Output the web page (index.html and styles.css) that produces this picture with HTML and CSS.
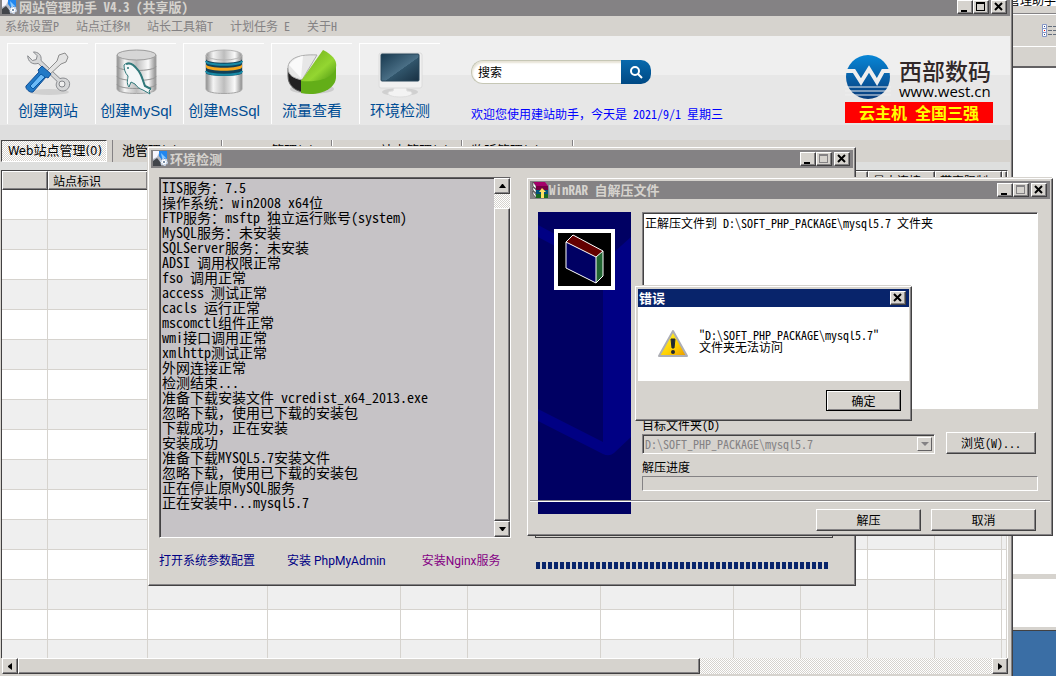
FILE: index.html
```html
<!DOCTYPE html>
<html lang="zh-CN">

<head>
    <meta charset="UTF-8">
    <meta name="viewport" content="width=device-width, initial-scale=1.0">
    <title>网站管理助手 V4.3</title>
    <link rel="stylesheet" href="styles.css">
</head>

<body>
    <svg class="defs" width="0" height="0" aria-hidden="true">
        <defs>
            <linearGradient id="metal" x1="0" x2="1" y1="0" y2="0">
                <stop offset="0" stop-color="#8c8c8c" />
                <stop offset=".2" stop-color="#f4f4f4" />
                <stop offset=".5" stop-color="#bdbdbd" />
                <stop offset=".8" stop-color="#fafafa" />
                <stop offset="1" stop-color="#8c8c8c" />
            </linearGradient>
            <linearGradient id="green" x1="0" x2="1" y1="0" y2="1">
                <stop offset="0" stop-color="#6ba818" />
                <stop offset=".6" stop-color="#94d631" />
                <stop offset="1" stop-color="#4a9410" />
            </linearGradient>
            <linearGradient id="screen" x1="0" x2="1" y1="0" y2="1">
                <stop offset="0" stop-color="#18394f" />
                <stop offset=".55" stop-color="#4a6f86" />
                <stop offset=".56" stop-color="#31556b" />
                <stop offset="1" stop-color="#183042" />
            </linearGradient>
            <linearGradient id="globe" x1="0" x2="0" y1="0" y2="1">
                <stop offset="0" stop-color="#0886d6" />
                <stop offset="1" stop-color="#083c7b" />
            </linearGradient>
            <linearGradient id="warn" x1="0" x2="1" y1="0" y2="1">
                <stop offset="0" stop-color="#ffff42" />
                <stop offset=".6" stop-color="#ffcf00" />
                <stop offset="1" stop-color="#e79600" />
            </linearGradient>
            <symbol id="app" viewBox="0 0 16 16">
                <path d="M0 0h8v14H0z" fill="#b5bac6" />
                <path d="M0 0h7L4 6 0 8z" fill="#f7f7ff" />
                <path d="M0 10l4-3 4 5v3H0z" fill="#42454a" />
                <path d="M6 0h8v9H9L6 5z" fill="#2186ef" />
                <path d="M8 2l5 5h-4z" fill="#84c7ff" />
                <circle cx="11" cy="11" r="3" fill="#fff" stroke="#c6d3e7" stroke-width="2" stroke-dasharray="2 1" />
                <circle cx="11" cy="11" r="1" fill="#526d8c" />
            </symbol>
            <symbol id="min" viewBox="0 0 10 10"><path d="M1 8h6v2H1z" /></symbol>
            <symbol id="max" viewBox="0 0 10 10"><path d="M0 0h9v9H0zM1 2v6h7V2z" fill-rule="evenodd" /></symbol>
            <symbol id="close" viewBox="0 0 10 10"><path d="M1 1l7 7M8 1L1 8" stroke="currentColor" stroke-width="2" /></symbol>
        </defs>
    </svg>

    <!-- window behind everything -->
    <div class="back-window">
        <div class="back-title">网站管理助手</div>
        <div class="back-bar"></div>
        <div class="back-tools">
            <svg width="14" height="14" viewBox="0 0 14 14">
                <path d="M.5.5h4v4h-4zM.5 4.5h4v4h-4zM.5 8.5h4v4h-4z" fill="#fff" stroke="#8496c6" />
                <path d="M2 2h1v1H2zM2 10h1v1H2z" fill="#314a84" />
                <path d="M2 6h1v1H2z" fill="#f00" />
                <path d="M6 2.500h8M6 6.500h8M6 10.500h8" stroke="#636d7b" stroke-dasharray="4 1" />
            </svg>
        </div>
        <div class="back-address"></div>
        <div class="back-list"></div>
        <div class="back-split"></div>
        <div class="back-status"></div>
    </div>

    <!-- main window -->
    <div class="main-window">
        <div class="titlebar main-title">
            <svg class="app-icon"><use href="#app" /></svg>
            <h1>网站管理助手 V4.3 (共享版)</h1>
            <div class="win-btns">
                <button aria-label="最小化"><svg><use href="#min" /></svg></button>
                <button aria-label="最大化"><svg><use href="#max" /></svg></button>
                <button class="x" aria-label="关闭"><svg><use href="#close" /></svg></button>
            </div>
        </div>
        <nav class="menu">
            <a href="#">系统设置P</a>
            <a href="#">站点迁移M</a>
            <a href="#">站长工具箱T</a>
            <a href="#">计划任务 E</a>
            <a href="#">关于H</a>
        </nav>

        <div class="banner">
            <div class="tools">
                <button class="tool">
                    <svg viewBox="0 0 50 50">
                        <ellipse cx="26" cy="43" rx="20" ry="3" fill="#d0d0d0" />
                        <path d="M6 5l5 5 4-1 1-4-4-4c5 0 9 3 8 9l20 19c6-2 11 2 10 7-1 6-8 8-12 4-3-3-2-6-1-8L17 13c-6 2-11-2-11-8z" transform="translate(-1 2) scale(.95)" fill="#d6d7d8" stroke="#84868a" />
                        <circle cx="39" cy="35" r="3" fill="#eee" stroke="#84868a" />
                        <path d="M42 4l-6 2-2 6-12 12 3 3 13-12 5-2 2-5z" fill="#e3e3e3" stroke="#8c8c8c" />
                        <path d="M19 17l9 8-3 4-2-1-13 15c-3 1-8-3-7-6l13-14-1-2z" fill="#2179c6" stroke="#104d94" />
                        <path d="M18 25l4 3-12 12-3-3z" fill="#6bbaf7" stroke="#0859a5" />
                    </svg>
                    <span>创建网站</span>
                </button>
                <button class="tool">
                    <svg viewBox="0 0 50 50">
                        <path d="M6 6v34c0 6 39 6 39 0V6z" fill="url(#metal)" stroke="#a5a5a5" />
                        <path d="M6 17c0 6 39 6 39 0M6 27c0 6 39 6 39 0M6 35c0 6 39 6 39 0" fill="none" stroke="#949494" />
                        <ellipse cx="25.500" cy="6" rx="19.500" ry="5" fill="#d6d6d6" stroke="#9c9c9c" />
                        <path d="M13 16c4-4 10-1 13 4 5 5 5 10 8 17l6 3-2 2 1 3-7-4c-3-1-6-3-8-6l-4-2-2 5c-3-4-1-8-1-11-3-3-4-7-4-11z" fill="#f3f7f8" stroke="#31797b" />
                        <path d="M15 15c5-2 8 1 11 5 5 5 5 10 8 17l6 3" fill="none" stroke="#31797b" stroke-width="2" />
                        <circle cx="17" cy="19" r="1" fill="#31797b" />
                    </svg>
                    <span>创建MySql</span>
                </button>
                <button class="tool">
                    <svg viewBox="0 0 50 50">
                        <path d="M7 6v34c0 6 36 6 36 0V6z" fill="url(#metal)" stroke="#a5a5a5" />
                        <path d="M7 10c0 5 36 5 36 0v14c0 4-36 4-36 0z" fill="#10415a" />
                        <path d="M7 15c0 5 36 5 36 0v3c0 5-36 5-36 0z" fill="#f7a61c" />
                        <path d="M7 12c0 5 36 5 36 0M7 22c0 5 36 5 36 0" fill="none" stroke="#188aa5" stroke-width="2" />
                        <ellipse cx="25" cy="6" rx="18" ry="5" fill="url(#metal)" stroke="#b5b5b5" />
                    </svg>
                    <span>创建MsSql</span>
                </button>
                <button class="tool">
                    <svg viewBox="0 0 50 50">
                        <ellipse cx="25" cy="40" rx="22" ry="5" fill="#ccc" />
                        <path d="M1 19v8c0 9 6 14 14 16V30z" fill="#212021" stroke="#636363" />
                        <path d="M1 19C1 9 13 5 30 6L15 31C6 29 1 26 1 19z" fill="#e7e7e7" stroke="#adadad" />
                        <path d="M16 7l-2 22L2 16c4-5 8-8 14-9z" fill="#fafafa" />
                        <path d="M14 31v13c18 4 35-4 35-16V14z" fill="#63ae18" />
                        <path d="M36 1c16 8 15 17 10 23-6 7-18 9-32 8z" fill="url(#green)" />
                    </svg>
                    <span>流量查看</span>
                </button>
                <button class="tool">
                    <svg viewBox="0 0 50 50">
                        <ellipse cx="25" cy="43" rx="18" ry="4" fill="#d0d0d0" />
                        <path d="M20 36h11l1 6c8 0 7 6-7 6s-15-6-7-6z" fill="#f3f3f3" stroke="#dedede" />
                        <rect x="4" y="4" width="43" height="35" rx="2" fill="#f1f1f1" stroke="#dcdcdc" />
                        <rect x="6" y="5" width="38" height="27" rx="1" fill="url(#screen)" stroke="#28465a" />
                    </svg>
                    <span>环境检测</span>
                </button>
            </div>
            <div class="search-area">
                <form class="search">
                    <input type="text" value="搜索" aria-label="搜索">
                    <button type="button" aria-label="开始搜索">
                        <svg width="14" height="14" viewBox="0 0 14 14">
                            <circle cx="6" cy="6" r="4" fill="none" stroke="#fff" stroke-width="2" />
                            <path d="M9 9l4 4" stroke="#fff" stroke-width="2" />
                        </svg>
                    </button>
                </form>
                <p class="welcome">欢迎您使用建站助手，今天是 2021/9/1 星期三</p>
            </div>
            <div class="brand">
                <div class="logo">
                    <svg width="46" height="46" viewBox="0 0 46 46">
                        <circle cx="23" cy="23" r="22" fill="url(#globe)" />
                        <path d="M0 17h9l7 11 8-13 8 13 6-11h8" fill="none" stroke="#eee" stroke-width="4" />
                        <path d="M0 33h46M0 37h46M0 41h46" stroke="#eee" stroke-width="1" />
                    </svg>
                    <div class="logo-text"><b>西部数码</b><span>www.west.cn</span></div>
                </div>
                <div class="slogan">云主机 全国三强</div>
            </div>
        </div>

        <div class="tabs">
            <button class="tab active">Web站点管理(0)</button>
            <button class="tab w-pool">池管理(0)</button>
            <button class="tab w-mysql">MySQL管理(0)</button>
            <button class="tab w-mssql">MsSQL站点管理(0)</button>
            <button class="tab w-ftp">监听管理(0)</button>
        </div>

        <div class="grid-box">
            <div class="grid-view">
                <table class="sites">
                    <colgroup>
                        <col class="c-mark"><col class="c-name"><col class="c-wide"><col class="c-bind"><col class="c-small">
                        <col class="c-bind"><col class="c-bind"><col class="c-small"><col class="c-small"><col class="c-small"><col class="c-small"><col>
                    </colgroup>
                    <thead>
                        <tr><th></th><th>站点标识</th><th></th><th></th><th></th><th></th><th></th><th></th><th></th><th>最大连接</th><th>带宽限制</th><th></th></tr>
                    </thead>
                    <tbody id="rows"></tbody>
                </table>
            </div>
            <div class="scroll scroll-x">
                <button aria-label="向左"><svg width="4" height="7"><path d="M4 0v7L0 4V3z" /></svg></button>
                <div class="thumb"></div>
                <div class="track"></div>
                <button aria-label="向右"><svg width="4" height="7"><path d="M0 0v7l4-3V3z" /></svg></button>
            </div>
        </div>
    </div>

    <!-- environment check -->
    <div class="window env">
        <div class="titlebar">
            <svg class="app-icon"><use href="#app" /></svg>
            <h2>环境检测</h2>
            <div class="win-btns">
                <button aria-label="最小化"><svg><use href="#min" /></svg></button>
                <button aria-label="最大化" disabled><svg><use href="#max" /></svg></button>
                <button class="x" aria-label="关闭"><svg><use href="#close" /></svg></button>
            </div>
        </div>
        <div class="env-body">
            <div class="log">
                <textarea readonly aria-label="检测日志">IIS服务：7.5
操作系统：win2008 x64位
FTP服务：msftp 独立运行账号(system)
MySQL服务：未安装
SQLServer服务：未安装
ADSI 调用权限正常
fso 调用正常
access 测试正常
cacls 运行正常
mscomctl组件正常
wmi接口调用正常
xmlhttp测试正常
外网连接正常
检测结束...
准备下载安装文件 vcredist_x64_2013.exe
忽略下载，使用已下载的安装包
下载成功，正在安装
安装成功
准备下载MYSQL5.7安装文件
忽略下载，使用已下载的安装包
正在停止原MySQL服务
正在安装中...mysql5.7</textarea>
                <div class="scroll scroll-y">
                    <button aria-label="向上"><svg width="7" height="4"><path d="M0 4h7L4 0H3z" /></svg></button>
                    <div class="track"></div>
                    <div class="thumb"></div>
                    <button aria-label="向下"><svg width="7" height="4"><path d="M0 0h7L4 4H3z" /></svg></button>
                </div>
            </div>
            <div class="env-panel"></div>
            <div class="env-links">
                <a href="#">打开系统参数配置</a>
                <a href="#">安装 PhpMyAdmin</a>
                <a href="#" class="visited">安装Nginx服务</a>
            </div>
            <progress class="blocks" max="100" value="100" aria-label="安装进度"></progress>
        </div>
    </div>

    <!-- self-extractor -->
    <div class="window rar">
        <div class="titlebar">
            <svg class="app-icon" viewBox="0 0 16 16">
                <path d="M1 0h12l3 4H4z" fill="#a5006b" />
                <path d="M1 0l3 4v3L1 4zM1 5l3 3v3L1 8zM1 9l3 4v3l-3-4z" fill="#fff" stroke="#222" stroke-width=".5" />
                <path d="M4 4h12v4H4z" fill="#730042" />
                <path d="M4 8h12v4H4z" fill="#00517b" />
                <path d="M4 12h12v4H4z" fill="#186921" />
                <path d="M10 6l4 4h-2v6H9v-6H7z" fill="#ffdf63" />
            </svg>
            <h2>WinRAR 自解压文件</h2>
            <div class="win-btns">
                <button aria-label="最小化"><svg><use href="#min" /></svg></button>
                <button aria-label="最大化" disabled><svg><use href="#max" /></svg></button>
                <button class="x" aria-label="关闭"><svg><use href="#close" /></svg></button>
            </div>
        </div>
        <div class="rar-main">
            <svg class="rar-art" viewBox="0 0 93 302">
                <path d="M0 0h93v302H0z" fill="#000063" />
                <path d="M0 13l30 16v12L0 25zM93 25v200l-17 16q-5 4-11 1L0 209v-12l65 33V50z" fill="#000084" />
                <path d="M18 19h57v57H18z" fill="#000" stroke="#fff" stroke-width="4" />
                <path d="M28 30l30 15v26L28 56z" fill="#000063" />
                <path d="M28 30l7-7 30 16-7 6z" fill="#630000" />
                <path d="M58 45l7-6v25l-7 7z" fill="#216531" />
                <path d="M28 30l7-7 30 16v25l-7 7-30-15zl30 15 7-6M58 45v26" fill="none" stroke="#fff" stroke-width="1" />
            </svg>
            <div class="rar-form">
                <textarea readonly aria-label="解压信息">正解压文件到 D:\SOFT_PHP_PACKAGE\mysql5.7 文件夹</textarea>
                <label for="folder">目标文件夹(D)</label>
                <div class="folder-row">
                    <div class="combo">
                        <select id="folder" disabled>
                            <option>D:\SOFT_PHP_PACKAGE\mysql5.7</option>
                        </select>
                        <span class="combo-arrow"><svg width="8" height="5"><path d="M0 0h8L4 4z" fill="#848284" /></svg></span>
                    </div>
                    <button class="btn">浏览(W)...</button>
                </div>
                <label for="unpack" class="unpack-label">解压进度</label>
                <progress id="unpack" max="100" value="0"></progress>
            </div>
        </div>
        <div class="rar-footer">
            <button class="btn">解压</button>
            <button class="btn">取消</button>
        </div>
    </div>

    <!-- error message -->
    <div class="window error" role="alertdialog" aria-labelledby="errTitle">
        <div class="titlebar">
            <h2 id="errTitle">错误</h2>
            <div class="win-btns">
                <button class="x" aria-label="关闭"><svg><use href="#close" /></svg></button>
            </div>
        </div>
        <div class="error-body">
            <svg width="32" height="28" viewBox="0 0 32 28">
                <path d="M16 1l14 25H2z" fill="url(#warn)" stroke="#adaeb5" stroke-width="2" stroke-linejoin="round" />
                <path d="M14 9h4l-1 9h-2z" fill="#212831" stroke="#212831" />
                <circle cx="16" cy="22" r="2" fill="#212831" />
            </svg>
            <p>"D:\SOFT_PHP_PACKAGE\mysql5.7"<br>文件夹无法访问</p>
        </div>
        <div class="error-footer">
            <button class="btn default">确定</button>
        </div>
    </div>

    <script>
        // The site list is empty, fill it with blank rows
        const rows = document.getElementById('rows');
        for (let i = 0; i < 16; i++) {
            const tr = rows.insertRow();
            for (let j = 0; j < 12; j++) {
                tr.insertCell();
            }
        }
    </script>
</body>

</html>
```

FILE: styles.css
```css
* {
    margin: 0;
    padding: 0;
    box-sizing: border-box;
}

body {
    position: relative;
    height: 100vh;
    overflow: hidden;
    background-color: #3a6ea5;
    font: 12px/16px "Noto Sans Mono CJK SC", "Noto Sans CJK SC", monospace;
    color: #000;
}

button,
input,
select,
textarea {
    font: inherit;
    color: inherit;
    border-radius: 0;
}

a {
    color: inherit;
    text-decoration: none;
}

h1,
h2 {
    font-size: 13px;
    line-height: 16px;
    white-space: nowrap;
}

.defs {
    position: absolute;
}

/* windows */
.window {
    position: absolute;
    padding: 2px;
    background-color: #d6d3ce;
    border: 1px solid;
    border-color: #fff #424142 #424142 #fff;
    box-shadow: inset -1px -1px #848284, -1px -1px #d6d3ce;
}

.titlebar {
    display: flex;
    align-items: center;
    gap: 1px;
    height: 18px;
    padding: 0 3px 0 2px;
    background-color: #848284;
    color: #d6d3ce;
}

.app-icon {
    width: 16px;
    height: 16px;
    flex: none;
}

.win-btns {
    display: flex;
    margin-left: auto;
}

.win-btns button,
.scroll button,
.btn {
    background-color: #d6d3ce;
    border: 1px solid;
    border-color: #fff #424142 #424142 #fff;
    box-shadow: inset -1px -1px #848284;
    color: #000;
}

.win-btns button {
    display: flex;
    justify-content: center;
    width: 16px;
    height: 14px;
    padding-top: 1px;
}

.win-btns svg {
    width: 10px;
    height: 10px;
    fill: currentColor;
}

.win-btns button:disabled {
    color: #848284;
}

.win-btns .x {
    margin-left: 2px;
}

.btn {
    width: 105px;
    height: 22px;
    line-height: 16px;
}

/* scroll bars */
.scroll {
    display: flex;
    flex: none;
}

.scroll button {
    display: flex;
    align-items: center;
    justify-content: center;
    width: 16px;
    height: 16px;
}

.thumb {
    background-color: #d6d3ce;
    border: 1px solid;
    border-color: #fff #424142 #424142 #fff;
    box-shadow: inset -1px -1px #848284;
}

.track,
.tab.active {
    background: repeating-conic-gradient(#fff 0 25%, #d6d3ce 0 50%) 0 0 / 2px 2px;
}

.scroll-x .thumb {
    flex: 7;
}

.scroll-x .track {
    flex: 3;
}

.scroll-y {
    flex-direction: column;
}

.scroll-y .track {
    height: 14px;
}

.scroll-y .thumb {
    flex: 1;
}

/* window at the back */
.back-window {
    position: absolute;
    inset: 0 0 45px 60%;
    display: flex;
    flex-direction: column;
    background-color: #d6d3ce;
    border-bottom: 1px solid #424142;
}

.back-title {
    height: 7px;
    background-color: #fff;
    border-bottom: 1px solid #d6d3ce;
    line-height: 0;
    text-align: right;
    overflow: hidden;
}

.back-bar {
    height: 7px;
    border-bottom: 1px solid #848284;
}

.back-tools {
    display: flex;
    justify-content: flex-end;
    height: 32px;
    padding-top: 9px;
    border-top: 1px solid #fff;
}

.back-address {
    height: 22px;
    border-top: 1px solid #fff;
    border-bottom: 2px solid #636163;
}

.back-list {
    flex: 1;
    background-color: #fff;
}

.back-split {
    height: 53px;
    background-color: #fff;
    border-top: 5px solid #d6d3ce;
}

.back-status {
    height: 3px;
}

/* main window */
.main-window {
    position: absolute;
    inset: 0 43px 0 0;
    display: flex;
    flex-direction: column;
    padding-right: 2px;
    background-color: #d6d3ce;
    border-right: 1px solid #424142;
    box-shadow: inset -1px 0 #848284;
}

.main-title {
    align-items: flex-start;
    height: 16px;
}

.main-title h1 {
    line-height: 14px;
}

.main-title .app-icon {
    margin-top: -1px;
}

.menu {
    display: flex;
    gap: 17px;
    height: 20px;
    padding: 2px 5px;
    color: #848284;
    white-space: nowrap;
}

.banner {
    display: flex;
    height: 104px;
    padding: 7px 17px 0 7px;
    background: linear-gradient(#efefef 39px, #e7e7e7 39px, #e7e7e7 89px, #dedede 89px);
}

.tools {
    display: flex;
    gap: 7px;
}

.tool {
    display: flex;
    flex-direction: column;
    align-items: center;
    width: 81px;
    height: 81px;
    padding-top: 5px;
    background: none;
    border: 0 solid #fff;
    border-width: 1px 0 0 1px;
    color: #004d94;
    font: 15px/24px "Liberation Sans", "Noto Sans CJK SC", sans-serif;
    white-space: nowrap;
}

.tool svg {
    width: 50px;
    height: 50px;
}

.search-area {
    padding: 17px 0 0 31px;
}

.search {
    display: flex;
    width: 180px;
    height: 24px;
    margin-bottom: 22px;
}

.search input {
    flex: 1;
    min-width: 0;
    padding: 0 6px;
    border: 1px solid #c6c7b5;
    border-right: 0;
    border-radius: 12px 0 0 12px;
    background-color: #fff;
    box-shadow: inset 1px 2px 2px #e7e3d6;
}

.search button {
    display: flex;
    align-items: center;
    justify-content: center;
    width: 30px;
    border: 0;
    border-radius: 0 10px 10px 0;
    background: linear-gradient(#0869ad, #004984);
}

.welcome {
    color: #0000ff;
    white-space: nowrap;
}

.brand {
    width: 148px;
    margin-left: auto;
    padding-top: 11px;
}

.logo {
    display: flex;
    gap: 8px;
    height: 48px;
}

.logo-text {
    display: flex;
    flex-direction: column;
    font-family: "Noto Sans CJK SC", sans-serif;
    color: #312829;
    white-space: nowrap;
}

.logo-text b {
    font-size: 23px;
    line-height: 26px;
    font-weight: 500;
    margin-top: 3px;
}

.logo-text span {
    font: 15px/16px "Open Sans", sans-serif;
    color: #000;
}

.slogan {
    background-color: #ff0000;
    color: #ffff00;
    font-size: 16px;
    font-weight: bold;
    line-height: 21px;
    text-align: center;
}

.tabs {
    display: flex;
    height: 23px;
    border-bottom: 1px solid #dedfde;
}

.tab {
    height: 22px;
    padding-left: 9px;
    background: none;
    border: 0;
    border-right: 1px solid #848284;
    box-shadow: 1px 0 #fff;
    font: 13px/20px "DejaVu Sans Condensed", "Noto Sans CJK SC", sans-serif;
    text-align: left;
    white-space: nowrap;
}

.tab.active {
    width: 106px;
    margin: 0 5px 0 1px;
    padding: 0 6px;
    border: 1px solid;
    border-color: #424142 #fff #fff #424142;
    box-shadow: none;
}

.w-pool {
    width: 110px;
    border-left: 1px solid #848284;
}

.w-mysql {
    width: 110px;
}

.w-mssql {
    width: 130px;
}

.w-ftp {
    width: 111px;
}

.grid-box {
    display: flex;
    flex: 1;
    flex-direction: column;
    min-height: 0;
    padding: 0 2px 2px 0;
    border-top: 7px solid #dedfde;
}

.grid-view {
    flex: 1;
    overflow: hidden;
    min-height: 0;
    margin-left: 1px;
    border: 1px solid #424142;
    border-right-color: #fff;
    border-bottom: 0;
    background-color: #fff;
}

.sites {
    width: 100%;
    table-layout: fixed;
    border-collapse: separate;
    border-spacing: 0;
}

.sites th {
    height: 19px;
    padding-left: 4px;
    background-color: #d6d3ce;
    border: 1px solid;
    border-color: #fff #424142 #424142 #fff;
    box-shadow: inset -1px -1px #848284;
    font-weight: normal;
    line-height: 14px;
    text-align: left;
    overflow: hidden;
    white-space: nowrap;
}

.sites td {
    height: 30px;
    border: 0 solid #d6d3ce;
    border-width: 0 1px 1px 0;
}

.sites tr:nth-child(even) td {
    background-color: #efefef;
}

.c-mark {
    width: 46px;
}

.c-name {
    width: 100px;
}

.c-wide {
    width: 120px;
}

.c-bind {
    width: 133px;
}

.c-small {
    width: 67px;
}

.scroll-x {
    margin-left: 2px;
}

/* environment check */
.env {
    left: 148px;
    top: 147px;
    width: 708px;
}

.env-body {
    display: grid;
    grid-template-columns: 352px 1fr;
    column-gap: 24px;
    padding: 9px 20px 14px 8px;
}

.log {
    display: flex;
    height: 361px;
    border: 1px solid;
    border-color: #636163 #fff #fff #636163;
    background-color: #c6c3c6;
    box-shadow: inset 1px 1px #424142;
}

.log textarea {
    flex: 1;
    padding: 2px;
    border: 0;
    background: none;
    font-size: 14px;
    line-height: 15px;
    resize: none;
    overflow: hidden;
    white-space: pre;
}

.env-panel {
    border: 1px solid #424142;
}

.env-links {
    display: flex;
    gap: 32px;
    padding-top: 15px;
    color: #000084;
    font: 12px/16px Roboto, "Noto Sans CJK SC", sans-serif;
    white-space: nowrap;
}

.env-links .visited {
    margin-left: 4px;
    color: #840084;
}

.blocks {
    appearance: none;
    width: 294px;
    height: 7px;
    margin-top: 24px;
    border: 0;
}

.blocks::-webkit-progress-bar {
    background: none;
}

.blocks::-webkit-progress-value {
    background: repeating-linear-gradient(90deg, transparent 0 1px, #08246b 1px 5px, transparent 5px 6px);
}

/* self-extractor */
.rar {
    left: 527px;
    top: 178px;
    width: 526px;
}

.rar-main {
    display: flex;
    align-items: flex-start;
    gap: 11px;
    padding: 13px 12px 9px 8px;
}

.rar-art {
    flex: none;
    width: 93px;
    height: 302px;
    margin-bottom: -23px;
}

.rar-form {
    flex: 1;
    display: flex;
    flex-direction: column;
}

.rar-form textarea {
    height: 197px;
    padding: 2px;
    border: 1px solid;
    border-color: #848284 #fff #fff #848284;
    background-color: #fff;
    box-shadow: inset 1px 1px #424142;
    resize: none;
    overflow: hidden;
}

.rar-form label {
    height: 15px;
    margin-top: 8px;
    line-height: 15px;
}

.folder-row {
    display: flex;
    align-items: flex-end;
    gap: 11px;
}

.combo {
    display: flex;
    flex: 1;
    height: 20px;
    padding: 2px;
    border: 1px solid;
    border-color: #848284 #fff #fff #848284;
    box-shadow: inset 1px 1px #424142;
}

.combo select {
    flex: 1;
    min-width: 0;
    appearance: none;
    border: 0;
    background: none;
    color: #848284;
    opacity: 1;
    line-height: 14px;
}

.combo-arrow {
    display: flex;
    align-items: center;
    justify-content: center;
    width: 15px;
    border: 1px solid;
    border-color: #fff #636163 #636163 #fff;
}

.folder-row .btn {
    width: 90px;
    margin-right: 2px;
}

.rar-form .unpack-label {
    margin-top: 5px;
}

.rar-form progress {
    appearance: none;
    width: 100%;
    height: 15px;
    margin-top: 2px;
    border: 1px solid;
    border-color: #848284 #fff #fff #848284;
}

.rar-form progress::-webkit-progress-bar {
    background-color: #d6d3ce;
}

.rar-footer {
    position: relative;
    display: flex;
    justify-content: flex-end;
    gap: 10px;
    padding: 8px 14px 2px;
    border-top: 1px solid #848284;
    box-shadow: inset 0 1px #fff;
}

/* error message */
.error {
    left: 635px;
    top: 286px;
    width: 277px;
}

.error .titlebar {
    padding: 0 3px 0 1px;
    background-color: #08246b;
    color: #fff;
}

.error-body {
    display: flex;
    align-items: center;
    gap: 10px;
    height: 74px;
    padding-left: 19px;
    background-color: #fff;
}

.error-body p {
    line-height: 12px;
    margin-bottom: 6px;
}

.error-footer {
    display: flex;
    justify-content: flex-end;
    padding: 9px 8px 7px;
}

.btn.default {
    width: 75px;
    height: 21px;
    outline: 1px solid #000;
    outline-offset: -1px;
    border-color: #000;
    box-shadow: inset 1px 1px #fff, inset -1px -1px #848284;
}
```
